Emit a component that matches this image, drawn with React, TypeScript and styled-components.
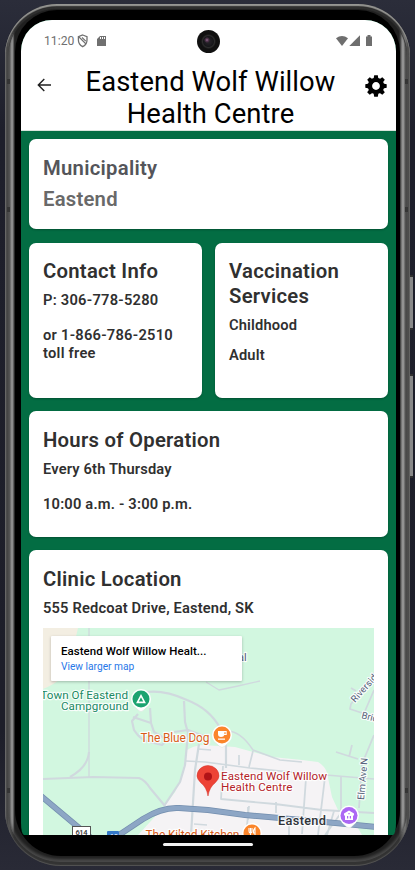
import React from "react";
import styled, { createGlobalStyle } from "styled-components";

const GlobalStyle = createGlobalStyle`
  * { box-sizing: border-box; }
  html, body { margin: 0; padding: 0; }
  body {
    background: linear-gradient(180deg, #2b2d3a 0, #1e1f2b 130px, #1d1e29 730px, #292a36 870px);
    font-family: Roboto, sans-serif;
    overflow: hidden;
  }
  h1, h2, p { margin: 0; }
`;

const Stage = styled.div`
  position: relative;
  height: 870px;
  padding: 4px 5px 0;
`;

const Frame = styled.div`
  width: 405px;
  height: 862px;
  padding: 3px 3px 4px;
  border-radius: 52px 52px 56px 56px;
  background: linear-gradient(90deg, #707070, #404040 2px, #555 4px, #333 9px, #333 394px, #777 400px, #444 403px, #666);
  box-shadow: inset 0 2px 1px #969693, inset 0 -1px 1px #555;
`;

const Bezel = styled.div`
  height: 855px;
  padding: 3px 7px;
  border-radius: 48px 48px 52px 52px;
  background: linear-gradient(90deg, #555 0, #555 2px, #8c8c8c 3px, #8c8c8c 5px, #303030 6px, #202020 7px, #202020 391px, #555 393px, #929292 394px, #929292 396px, #555 397px, #505050 100%);
  box-shadow: inset 0 2px 1px #303030, inset 0 -3px 3px #494949;
`;

const Glass = styled.div`
  height: 846px;
  padding: 10px 4px 0 6px;
  border-radius: 42px 42px 46px 46px;
  background: #000;
`;

const Screen = styled.main`
  width: 375px;
  height: 815px;
  overflow: hidden;
  border-radius: 31px 31px 3px 3px / 31px 31px 12px 12px;
  background: #036d43;
`;

const StatusBar = styled.div`
  position: relative;
  display: flex;
  align-items: center;
  height: 42px;
  padding: 0 23px;
  background: #fff;
  color: #707070;
  font-size: 12.2px;
`;

const StatusIcons = styled.svg`
  margin-left: 3px;
`;

const SignalIcons = styled.svg`
  margin-left: auto;
`;

const Camera = styled.div`
  position: absolute;
  left: 176px;
  top: 10px;
  width: 23px;
  height: 23px;
  border-radius: 50%;
  background: radial-gradient(circle at 10px 10px, #90708e 0, #51344d 1.5px, transparent 3px),
    radial-gradient(circle, #29252b 0, #17171a 5px, #2c2c2c 6px, #101010 7.5px, #121212 100%);
`;

const Header = styled.header`
  display: grid;
  grid-template-columns: 46px 1fr 42px;
  height: 69px;
  padding-top: 4px;
  background: #fff;
  border-bottom: 1px solid #d8e5dc;
`;

const Title = styled.h1`
  font-size: 27.4px;
  font-weight: 400;
  line-height: 32px;
  letter-spacing: 0.08px;
  text-align: center;
  color: #000;
  white-space: nowrap;
`;

const HeaderIcon = styled.svg<{ $left: number; $top: number }>`
  margin: ${(p) => p.$top}px 0 0 ${(p) => p.$left}px;
`;

const Content = styled.div`
  display: flex;
  flex-direction: column;
  gap: 13px;
  padding: 8px 8px 0;
`;

const Row = styled.div`
  display: grid;
  grid-template-columns: 173px 173px;
  gap: 13px;
  margin-top: 1px;
`;

const Card = styled.section<{ $height: number; $top?: number }>`
  height: ${(p) => p.$height}px;
  padding: ${(p) => p.$top ?? 17}px 14px 0;
  border-radius: 7px;
  background: #fff;
  box-shadow: 0 1px 2px rgba(0, 0, 0, 0.25);
  color: #303030;
`;

const Heading = styled.h2<{ $color?: string }>`
  font-size: 20.3px;
  font-weight: 600;
  line-height: 24.5px;
  letter-spacing: 0.26px;
  white-space: nowrap;
  color: ${(p) => p.$color ?? "#303030"};
`;

const Value = styled.p`
  margin-top: 6.5px;
  font-size: 20.3px;
  font-weight: 600;
  line-height: 24.5px;
  letter-spacing: 0.22px;
  color: #696969;
`;

const Line = styled.p<{ $gap?: number; $spacing?: number }>`
  margin-top: ${(p) => p.$gap ?? 8}px;
  font-size: 14.7px;
  font-weight: 600;
  line-height: 17.5px;
  letter-spacing: ${(p) => p.$spacing ?? 0.15}px;
  white-space: nowrap;
`;

const MapView = styled.div`
  position: relative;
  width: 331px;
  height: 207px;
  margin-top: 11px;
  overflow: hidden;
`;

const MapCard = styled.div`
  position: absolute;
  left: 8px;
  top: 8px;
  width: 191px;
  height: 45px;
  padding: 8px 10px;
  border-radius: 1px;
  background: #fff;
  box-shadow: 0 1px 3px rgba(0, 0, 0, 0.25);
`;

const PlaceName = styled.p`
  font-size: 11.5px;
  font-weight: 500;
  line-height: 14px;
  letter-spacing: 0.04px;
  color: #000;
  white-space: nowrap;
`;

const MapLink = styled.p`
  margin-top: 2px;
  font-size: 10.2px;
  line-height: 13px;
  color: #2878e8;
`;

const HomeBar = styled.div`
  width: 90px;
  height: 3px;
  margin: 8px 0 0 142px;
  border-radius: 2px;
  background: #f2f2f2;
`;

const SideButton = styled.div<{ $top: number; $height: number }>`
  position: absolute;
  left: 410px;
  top: ${(p) => p.$top}px;
  width: 3px;
  height: ${(p) => p.$height}px;
  border: solid #303030;
  border-width: 2px 0;
  background: #898989;
`;

const Antenna = styled.div<{ $left: number; $top: number }>`
  position: absolute;
  left: ${(p) => p.$left}px;
  top: ${(p) => p.$top}px;
  width: 3px;
  height: 5px;
  background: #353535;
`;

const gearTeeth = [0, 45, 90, 135, 180, 225, 270, 315];

function Pin({ x, y, color, children }: { x: number; y: number; color: string; children: React.ReactNode }) {
  return (
    <g transform={`translate(${x} ${y})`}>
      <path d="M-7 7 L-3 11 Q0 14 3 11 L7 7Z" fill="#fff" stroke="#cfd8d2" strokeWidth=".4" />
      <circle r="10" fill="#fff" />
      <circle r="8.5" fill={color} />
      {children}
    </g>
  );
}

function ClinicMap() {
  return (
    <svg width="331" height="207" viewBox="43 628 331 207" fontFamily="Roboto, sans-serif">
      <rect x="43" y="628" width="331" height="207" fill="#d2f7e0" />
      <path d="M43 628H78Q73 646 71 665Q65 680 43 689Z" fill="#f3eee2" />
      <path d="M187 750Q193 746 202 745L235 747L253 752L272 757L302 760L318 762Q325 766 327 773L332 797L338 810L345 820L358 835H138L150 822L164 807L175 792L181 779Z" fill="#f5f3f5" />
      <path d="M334 811L348 811L362 835H342Z" fill="#f5f3f5" />
      <g fill="none" stroke="#d0d9de" strokeWidth="2.2" strokeLinejoin="round">
        <path d="M89 628V777" strokeWidth="1.3" />
        <path d="M43 779L93 777L139 778Q145 780 150 788L165 806" />
        <path d="M70 777Q88 767 89 752" />
        <path d="M147 692Q165 690 187 700Q210 709 220 728L226 745V768" />
        <path d="M184 701L185 722L188 733L185 765L180 782L164 806" />
        <path d="M138 714L132 721L134 730Q141 741 150 742L162 745L168 739" />
        <path d="M133 717L151 723L150 708M151 723L154 732L164 738M174 732L188 730L204 736" />
        <path d="M199 744L195 770L191 835" />
        <path d="M226 731Q240 730 253 750L280 760L302 762" strokeWidth="1.5" />
        <path d="M239 755V765M253 751L249 767M198 749L211 750M186 761L205 762L250 768L290 772L374 779M194 824L207 825" strokeWidth="1.7" />
        <path d="M223 766L221 799L275 804L322 810L374 813M306 778L302 834M325 777L318 835M341 777V813L325 835M334 811L327 835M248 807V820M276 802V813M249 806L246 835" strokeWidth="1.8" />
        <path d="M374 735L362 764L359 808M336 752L358 759M352 745L349 757M289 835V821" strokeWidth="1.8" />
        <path d="M374 673L351 704L350 709L374 717M374 690L365 711M351 688L356 691" strokeWidth="1.7" />
        <path d="M206 682L219 690L238 686L260 681" strokeWidth="1.3" />
      </g>
      <g fill="none" stroke="#738eae" strokeWidth="6">
        <path d="M41 796L90 837M113 839L143 819Q162 807 179 808L208 810L245 815L325 822L376 827" />
      </g>
      <g fill="none" stroke="#8da6c5" strokeWidth="4.5">
        <path d="M41 796L90 837M113 839L143 819Q162 807 179 808L208 810L245 815L325 822L376 827" />
      </g>
      <rect x="72.5" y="826.5" width="18" height="12" fill="#fff" stroke="#555" />
      <text x="75.5" y="834.5" fontSize="7.5" fontWeight="500" fill="#333" textLength="12">614</text>
      <rect x="107" y="831" width="12" height="10" rx="1" fill="#3579c8" />
      <text x="110" y="839" fontSize="7" fill="#fff">13</text>

      <g stroke="#fff" strokeOpacity=".85" strokeWidth="2.4" paintOrder="stroke" strokeLinejoin="round">
        <g fill="#208963" fontSize="11.7">
          <text x="40.5" y="698.5" textLength="87.5">Town Of Eastend</text>
          <text x="61" y="710" textLength="67.5">Campground</text>
        </g>
        <text x="140.5" y="741.5" fontSize="12" fill="#d95c18" textLength="69">The Blue Dog</text>
        <g fill="#b42329" fontSize="11.7">
          <text x="221" y="779.5" textLength="106">Eastend Wolf Willow</text>
          <text x="221" y="791" textLength="71.5">Health Centre</text>
        </g>
        <text x="145.5" y="838.5" fontSize="12" fill="#d95c18" textLength="94">The Kilted Kitchen</text>
        <text x="278" y="825" fontSize="12.8" fontWeight="500" fill="#303338" textLength="48">Eastend</text>
        <g fill="#535e78" fontSize="9.5">
          <text x="238" y="660.5" fontSize="11">al</text>
          <text transform="translate(355 703) rotate(-48)" textLength="39">Riverside</text>
          <text transform="translate(361 718) rotate(14)">Bridge St</text>
          <text transform="translate(364 800) rotate(-85)" textLength="42">Elm Ave N</text>
        </g>
      </g>

      <Pin x={141} y={699} color="#1ca371">
        <path d="M-3.6 3.4L0-3.4L3.6 3.4Z" fill="none" stroke="#fff" strokeWidth="1.6" />
      </Pin>
      <Pin x={222} y={735} color="#fb852b">
        <path d="M-4-4H4.7V0H2.3Q2 2-1 2T-4-1ZM-4 3.5H3V4.8H-4Z" fill="#fff" />
        <path d="M2.4-2.8H3.6V-1H2.4Z" fill="#fb852b" />
      </Pin>
      <Pin x={252} y={833} color="#fb852b">
        <path d="M-3-5V-2Q-3 0-1.5 0V5M-1.5-5V0M0-5V-2Q0 0-1.5 0M3 5V-5Q1-3 1.5 0H3" fill="none" stroke="#fff" strokeWidth="1.1" />
      </Pin>
      <Pin x={349} y={815.5} color="#ac67f4">
        <path d="M0-5L5-2V0H-5V-2ZM-4 0H4V4.5H-4Z" fill="#fff" />
        <path d="M-2 .5H-.8V3H-2ZM.8 .5H2V3H.8ZM-.6-2.5H.6V-1.3H-.6Z" fill="#ac67f4" />
      </Pin>
      <path d="M208 796Q206.5 787 201 783Q197 779 197 776A11 10.5 0 0 1 219 776Q219 779 215 783Q209.5 787 208 796Z" fill="#ed4336" stroke="#d23329" strokeWidth=".5" />
      <circle cx="208" cy="776.5" r="4" fill="#b11317" />
    </svg>
  );
}

export default function App() {
  return (
    <>
      <GlobalStyle />
      <Stage>
        <Frame>
          <Bezel>
            <Glass>
              <Screen>
                <StatusBar>
                  11:20
                  <StatusIcons width="34" height="14" viewBox="0 0 34 14">
                    <path d="M5.700 1L10 2.700V6Q10 10.500 5.700 12.700Q1.400 10.500 1.400 6V2.700Z" fill="none" stroke="#707070" strokeWidth="1.3" />
                    <path d="M2 3L9 10M5 3.500L8.800 7.200" stroke="#707070" strokeWidth="1.1" />
                    <path d="M23 2H29V12H20V5ZM23 3V5H24V3ZM25 3V5H26V3ZM27 3V5H28V3Z" fill="#707070" fillRule="evenodd" />
                  </StatusIcons>
                  <SignalIcons width="38" height="14" viewBox="0 0 38 14" fill="#6e6e6e">
                    <path d="M1 4.3Q7-.4 13 4.3L7 12Z" />
                    <path d="M14.3 12L25 1.3V12Z" />
                    <path d="M31 2.5H32.5V1H35.5V2.5H37V12H31Z" />
                  </SignalIcons>
                  <Camera />
                </StatusBar>
                <Header>
                  <HeaderIcon $left={16} $top={11} width="15" height="16" viewBox="0 0 15 16">
                    <path d="M14 8H1.5M7.3 2L1.3 8L7.3 14" fill="none" stroke="#202020" strokeWidth="1.4" />
                  </HeaderIcon>
                  <Title>
                    Eastend Wolf Willow
                    <br />
                    Health Centre
                  </Title>
                  <HeaderIcon $left={10} $top={7.5} width="24" height="24" viewBox="-12 -12 24 24">
                    <circle r="6.1" fill="none" stroke="#000" strokeWidth="4.4" />
                    {gearTeeth.map((angle) => (
                      <path key={angle} d="M-2.4-7.2L-1.8-10.7H1.8L2.4-7.2Z" transform={`rotate(${angle})`} />
                    ))}
                  </HeaderIcon>
                </Header>
                <Content>
                  <Card $height={90}>
                    <Heading $color="#54555a">Municipality</Heading>
                    <Value>Eastend</Value>
                  </Card>
                  <Row>
                    <Card $height={155} $top={16}>
                      <Heading>Contact Info</Heading>
                      <Line $spacing={0.25}>P: 306-778-5280</Line>
                      <Line $gap={18} $spacing={0.25}>
                        or 1-866-786-2510
                        <br />
                        toll free
                      </Line>
                    </Card>
                    <Card $height={155} $top={16}>
                      <Heading>
                        Vaccination
                        <br />
                        Services
                      </Heading>
                      <Line $gap={9}>Childhood</Line>
                      <Line $gap={12.5}>Adult</Line>
                    </Card>
                  </Row>
                  <Card $height={126}>
                    <Heading>Hours of Operation</Heading>
                    <Line>Every 6th Thursday</Line>
                    <Line $gap={18} $spacing={0.19}>10:00 a.m. - 3:00 p.m.</Line>
                  </Card>
                  <Card $height={300}>
                    <Heading>Clinic Location</Heading>
                    <Line>555 Redcoat Drive, Eastend, SK</Line>
                    <MapView>
                      <ClinicMap />
                      <MapCard>
                        <PlaceName>Eastend Wolf Willow Healt...</PlaceName>
                        <MapLink>View larger map</MapLink>
                      </MapCard>
                    </MapView>
                  </Card>
                </Content>
              </Screen>
              <HomeBar />
            </Glass>
          </Bezel>
        </Frame>
        <SideButton $top={275} $height={55} />
        <SideButton $top={374} $height={104} />
        <Antenna $left={7} $top={79} />
        <Antenna $left={7} $top={207} />
        <Antenna $left={7} $top={788} />
        <Antenna $left={405} $top={79} />
        <Antenna $left={405} $top={207} />
        <Antenna $left={405} $top={788} />
      </Stage>
    </>
  );
}
